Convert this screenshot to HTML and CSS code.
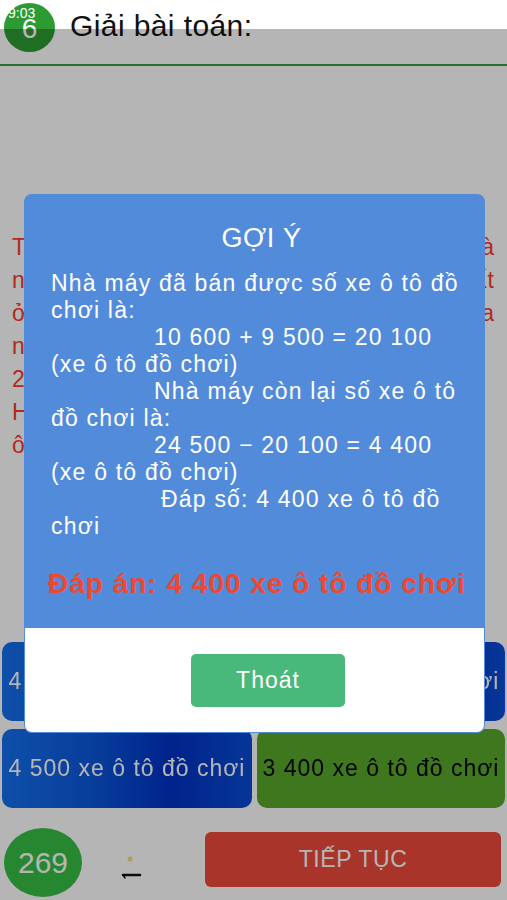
FILE: index.html
```html
<!DOCTYPE html>
<html lang="vi">
<head>
  <meta charset="UTF-8">
  <meta name="viewport" content="width=device-width, initial-scale=1.0">
  <title>Giải bài toán</title>
  <link rel="stylesheet" href="styles.css">
</head>
<body>

  <div class="status-time">9:03</div>

  <header class="top">
    <div class="q-number">6</div>
    <h1 class="q-title">Giải bài toán:</h1>
  </header>
  <div class="rule"></div>

  <div class="question">
    <p class="full">Tháng trước một nhà máy sản xuất và</p>
    <p class="full">nhập về 24 500 xe ô tô đồ chơi để xuất</p>
    <p class="full">ở cửa hàng. Lần đầu nhà máy bán ra</p>
    <p>những 10 600 xe ô tô đồ chơi, lần</p>
    <p>2 bán thêm 9 500 xe ô tô đồ chơi.</p>
    <p>Hỏi nhà máy còn lại bao nhiêu xe</p>
    <p>ô tô đồ chơi?</p>
  </div>

  <div class="answers">
    <button class="answer blue">4 400 xe ô tô đồ chơi</button>
    <button class="answer blue">5 400 xe ô tô đồ chơi</button>
    <button class="answer blue">4 500 xe ô tô đồ chơi</button>
    <button class="answer green">3 400 xe ô tô đồ chơi</button>
  </div>

  <footer class="bottom">
    <div class="score">269</div>
    <svg class="hint-icon" width="24" height="40" viewBox="0 0 24 40">
      <circle cx="10" cy="8" r="2.5" fill="#f3e27a"/>
      <path d="M3 24 L20 24" stroke="#111" stroke-width="2.5" stroke-linecap="round"/>
      <path d="M3 24 L5 27" stroke="#111" stroke-width="1.5" stroke-linecap="round"/>
    </svg>
    <button class="next">TIẾP TỤC</button>
  </footer>

  <!-- hint dialog -->
  <div class="backdrop"></div>
  <div class="dialog">
    <div class="dialog-body">
      <h2 class="dialog-title">GỢI Ý</h2>
      <p>Nhà máy đã bán được số xe ô tô đồ<br>chơi là:</p>
      <p class="indent">10 600 + 9 500 = 20 100<br><span class="unindent">(xe ô tô đồ chơi)</span></p>
      <p class="indent">Nhà máy còn lại số xe ô tô<br><span class="unindent">đồ chơi là:</span></p>
      <p class="indent">24 500 − 20 100 = 4 400<br><span class="unindent">(xe ô tô đồ chơi)</span></p>
      <p class="indent wide">Đáp số: 4 400 xe ô tô đồ<br><span class="unindent">chơi</span></p>
      <p class="result">Đáp án: 4 400 xe ô tô đồ chơi</p>
    </div>
    <div class="dialog-foot">
      <button class="close">Thoát</button>
    </div>
  </div>

</body>
</html>
```

FILE: styles.css
```css
body {
  margin: 0;
  width: 507px;
  height: 900px;
  overflow: hidden;
  font-family: "Liberation Sans", Arial, sans-serif;
  background-color: #ffffff;
  color: #111;
}

p {
  margin: 0;
}

button {
  font-family: inherit;
  border: none;
  cursor: pointer;
}

/* status bar clock, sits over everything */
.status-time {
  position: absolute;
  top: 5px;
  left: 8px;
  z-index: 5;
  font-size: 14px;
  color: #ffffff;
}

.top {
  display: flex;
  align-items: flex-start;
  gap: 15px;
  padding: 3px 0 0 4px;
  height: 61px;
}

.q-number {
  width: 51px;
  height: 49px;
  border-radius: 50%;
  background-color: #2d9b33;
  color: #ffffff;
  font-size: 28px;
  display: flex;
  justify-content: center;
  align-items: center;
  padding-top: 3px;
  box-sizing: border-box;
}

.q-title {
  margin: 6px 0 0;
  font-size: 30px;
  font-weight: 400;
  letter-spacing: 0.4px;
  color: #111;
}

.rule {
  height: 2px;
  background-color: #399c40;
}

.question {
  padding: 165px 12px 0;
  color: #fb3b2d;
  font-size: 23px;
  letter-spacing: 1px;
  line-height: 33px;
}

.question .full {
  text-align: justify;
  text-align-last: justify;
}

.answers {
  position: fixed;
  top: 642px;
  left: 2px;
  right: 2px;
  display: grid;
  grid-template-columns: 250px 248px;
  grid-auto-rows: 79px;
  column-gap: 5px;
  row-gap: 8px;
}

.answer {
  border-radius: 10px;
  font-size: 23px;
  letter-spacing: 1px;
  padding: 0;
  white-space: nowrap;
}

.answer.blue {
  background: linear-gradient(90deg, #1570ee 0%, #0c58dc 35%, #0032c4 68%, #0a4cd6 100%);
  color: #ffffff;
}

.answer.green {
  background-color: #58a82a;
  color: #000;
}

.bottom {
  position: fixed;
  top: 828px;
  left: 4px;
  right: 6px;
  display: flex;
  align-items: flex-start;
}

.score {
  width: 78px;
  height: 69px;
  border-radius: 50%;
  background-color: #37bf45;
  color: #ffffff;
  font-size: 30px;
  display: flex;
  justify-content: center;
  align-items: center;
}

.hint-icon {
  margin: 23px 0 0 38px;
}

.next {
  margin: 4px 0 0 auto;
  width: 296px;
  height: 55px;
  border-radius: 6px;
  background-color: #ef4a3b;
  color: #ffffff;
  font-size: 23px;
  letter-spacing: 0.6px;
}

/* dim layer under the dialog, status bar stays bright */
.backdrop {
  position: fixed;
  top: 29px;
  left: 0;
  right: 0;
  bottom: 0;
  background-color: rgba(0, 0, 0, 0.29);
}

.dialog {
  position: fixed;
  top: 194px;
  left: 24px;
  width: 461px;
  background-color: #538bdb;
  border-radius: 8px;
  padding: 0 1px 1px;
  box-sizing: border-box;
}

.dialog-body {
  height: 434px;
  padding: 27px 12px 0 26px;
  box-sizing: border-box;
  color: #ffffff;
  font-size: 23px;
  letter-spacing: 1.2px;
  line-height: 27px;
}

.dialog-title {
  margin: 0 0 15px;
  text-align: center;
  font-size: 27px;
  font-weight: 400;
  letter-spacing: 0.6px;
  line-height: 34px;
}

.indent {
  text-indent: 103px;
}

.indent.wide {
  text-indent: 110px;
}

.unindent {
  display: inline-block;
  text-indent: 0;
}

.result {
  margin: 28px 0 0 -3px;
  color: #ea4a33;
  font-size: 28px;
  font-weight: 700;
  letter-spacing: 1px;
  line-height: 32px;
  white-space: nowrap;
}

.dialog-foot {
  height: 104px;
  background-color: #ffffff;
  border-radius: 0 0 7px 7px;
  display: flex;
  justify-content: center;
  align-items: center;
  padding-left: 27px;
}

.close {
  width: 154px;
  height: 53px;
  border-radius: 5px;
  background-color: #48b97a;
  color: #ffffff;
  font-size: 23px;
  letter-spacing: 1px;
}
```
